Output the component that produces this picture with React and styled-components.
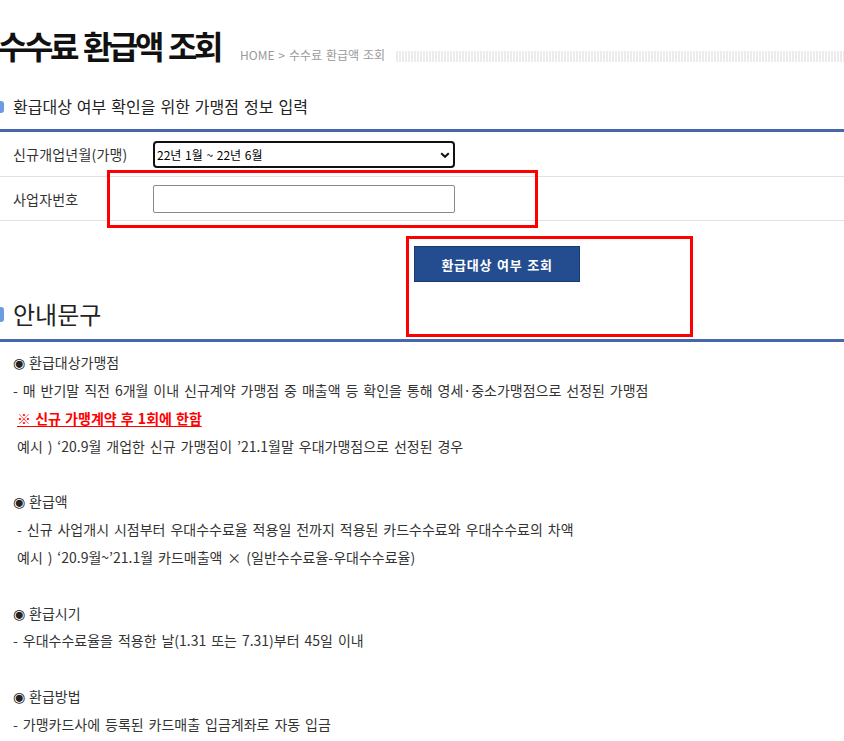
import React from "react";
import styled, { createGlobalStyle } from "styled-components";

const Global = createGlobalStyle`
  html, body { margin: 0; padding: 0; background: #fff; }
  body {
    font-family: "Noto Sans CJK KR", "Noto Sans", sans-serif;
    color: #333;
    overflow: hidden;
  }
`;

const Page = styled.div`
  position: relative;
  width: 844px;
  height: 741px;
  overflow: hidden;
`;

const Header = styled.div`
  display: flex;
  align-items: flex-start;
  height: 64px;
  padding-top: 24px;
`;

const Title = styled.h1`
  margin: 0 0 0 -2px;
  width: 221px;
  flex: none;
  font-size: 32px;
  line-height: 42px;
  font-weight: 700;
  color: #111;
  letter-spacing: -3.4px;
  word-spacing: 3px;
  white-space: nowrap;
`;

const Crumb = styled.div`
  margin: 23px 0 0 21px;
  font-size: 12px;
  line-height: 16px;
  color: #9a9a9a;
  word-spacing: 1.2px;
  white-space: nowrap;
`;

const Stripes = styled.div`
  flex: 1;
  height: 11px;
  margin: 27px 0 0 11px;
  background: repeating-linear-gradient(90deg, #ececec 0 2px, #fff 2px 3px);
`;

const SectionHead = styled.div`
  display: flex;
  align-items: center;
  height: ${(p) => p.$h}px;
  padding-top: ${(p) => p.$pt || 0}px;
  padding-bottom: ${(p) => p.$pb || 0}px;
  border-bottom: 3px solid #4667ab;
  box-sizing: content-box;
`;

const Bullet = styled.span`
  display: block;
  width: 4px;
  height: ${(p) => p.$h}px;
  border-radius: 0 3px 3px 0;
  background: #6b9be0;
  margin-right: 9px;
`;

const HeadText = styled.h2`
  margin: 0;
  font-size: ${(p) => p.$size}px;
  font-weight: 400;
  color: #222;
  word-spacing: ${(p) => p.$ws}px;
  line-height: 1.3;
  white-space: nowrap;
`;

const FormRow = styled.div`
  display: flex;
  align-items: center;
  height: ${(p) => p.$h}px;
  border-bottom: 1px solid #e2e2e2;
`;

const Label = styled.div`
  width: 153px;
  flex: none;
  padding-left: 13px;
  box-sizing: border-box;
  font-size: 14px;
  color: #333;
  letter-spacing: 0.2px;
  white-space: nowrap;
`;

const SelectWrap = styled.div`
  position: relative;
  width: 302px;
  height: 27px;
`;

const Select = styled.select`
  appearance: none;
  width: 100%;
  height: 100%;
  box-sizing: border-box;
  border: 2px solid #111;
  border-radius: 4px;
  background: #fff;
  padding: 0 0 0 2px;
  font-family: "Noto Sans CJK KR", sans-serif;
  font-size: 12px;
  word-spacing: 1px;
  color: #000;
  outline: none;
`;

const Chevron = styled.svg`
  position: absolute;
  right: 5px;
  top: 11px;
  pointer-events: none;
`;

const Input = styled.input`
  width: 302px;
  height: 28px;
  box-sizing: border-box;
  border: 1px solid #8a8a8a;
  border-radius: 2px;
  padding: 0 4px;
  outline: none;
`;

const ButtonRow = styled.div`
  display: flex;
  padding: 25px 0 0 414px;
`;

const Button = styled.button`
  width: 166px;
  height: 36px;
  background: #244d8f;
  border: 1px solid #1a3a72;
  color: #fff;
  font-family: "Noto Sans CJK KR", sans-serif;
  font-size: 13px;
  font-weight: 700;
  letter-spacing: 0.7px;
  word-spacing: 1.3px;
  cursor: pointer;
`;

const Guide = styled.div`
  padding-top: 7px;
`;

const Line = styled.p`
  margin: 0;
  height: 27.85px;
  line-height: 27.85px;
  padding-left: ${(p) => (p.$indent ? 17 : 13)}px;
  font-size: 14px;
  color: ${(p) => (p.$warn ? "#ff0000" : "#333")};
  font-weight: ${(p) => (p.$warn ? 700 : 400)};
  word-spacing: ${(p) => (p.$warn ? 1 : 1.8)}px;
  white-space: nowrap;
`;

const Warn = styled.span`
  text-decoration: underline;
  text-underline-offset: 2px;
`;

const Mark = styled.span`
  display: inline-block;
  font-family: "DejaVu Sans", sans-serif;
  font-size: 14px;
  width: 16px;
  color: #222;
`;

const RedBox = styled.div`
  position: absolute;
  left: ${(p) => p.$x}px;
  top: ${(p) => p.$y}px;
  width: ${(p) => p.$w}px;
  height: ${(p) => p.$hh}px;
  border: 3px solid #ff0000;
  box-sizing: border-box;
  pointer-events: none;
`;

const Item = ({ children }) => (
  <Line>
    <Mark>◉</Mark>
    {children}
  </Line>
);

export default function App() {
  return (
    <>
      <Global />
      <Page>
        <Header>
          <Title>수수료 환급액 조회</Title>
          <Crumb>HOME &gt; 수수료 환급액 조회</Crumb>
          <Stripes />
        </Header>

        <SectionHead $h={37} $pt={0} $pb={4}>
          <Bullet $h={12} />
          <HeadText $size={16} $ws={1.4}>
            환급대상 여부 확인을 위한 가맹점 정보 입력
          </HeadText>
        </SectionHead>

        <FormRow $h={44}>
          <Label>신규개업년월(가맹)</Label>
          <SelectWrap>
            <Select defaultValue="1">
              <option value="1">22년 1월 ~ 22년 6월</option>
            </Select>
            <Chevron width="10" height="6" viewBox="0 0 10 6">
              <path d="M1.2 1.2 L5 4.8 L8.8 1.2" fill="none" stroke="#111" strokeWidth="2" />
            </Chevron>
          </SelectWrap>
        </FormRow>
        <FormRow $h={43}>
          <Label>사업자번호</Label>
          <Input type="text" />
        </FormRow>

        <ButtonRow>
          <Button>환급대상 여부 조회</Button>
        </ButtonRow>

        <SectionHead $h={50} $pt={7} $pb={0}>
          <Bullet $h={15} />
          <HeadText $size={24} $ws={2}>
            안내문구
          </HeadText>
        </SectionHead>

        <Guide>
          <Item>환급대상가맹점</Item>
          <Line>- 매 반기말 직전 6개월 이내 신규계약 가맹점 중 매출액 등 확인을 통해 영세·중소가맹점으로 선정된 가맹점</Line>
          <Line $indent $warn>
            <Warn>※ 신규 가맹계약 후 1회에 한함</Warn>
          </Line>
          <Line $indent>예시 ) ‘20.9월 개업한 신규 가맹점이 ’21.1월말 우대가맹점으로 선정된 경우</Line>
          <Line />
          <Item>환급액</Item>
          <Line $indent>- 신규 사업개시 시점부터 우대수수료율 적용일 전까지 적용된 카드수수료와 우대수수료의 차액</Line>
          <Line $indent>예시 ) ‘20.9월~’21.1월 카드매출액 × (일반수수료율-우대수수료율)</Line>
          <Line />
          <Item>환급시기</Item>
          <Line>- 우대수수료율을 적용한 날(1.31 또는 7.31)부터 45일 이내</Line>
          <Line />
          <Item>환급방법</Item>
          <Line>- 가맹카드사에 등록된 카드매출 입금계좌로 자동 입금</Line>
        </Guide>

        <RedBox $x={107} $y={170} $w={431} $hh={58} />
        <RedBox $x={406} $y={236} $w={287} $hh={101} />
      </Page>
    </>
  );
}
